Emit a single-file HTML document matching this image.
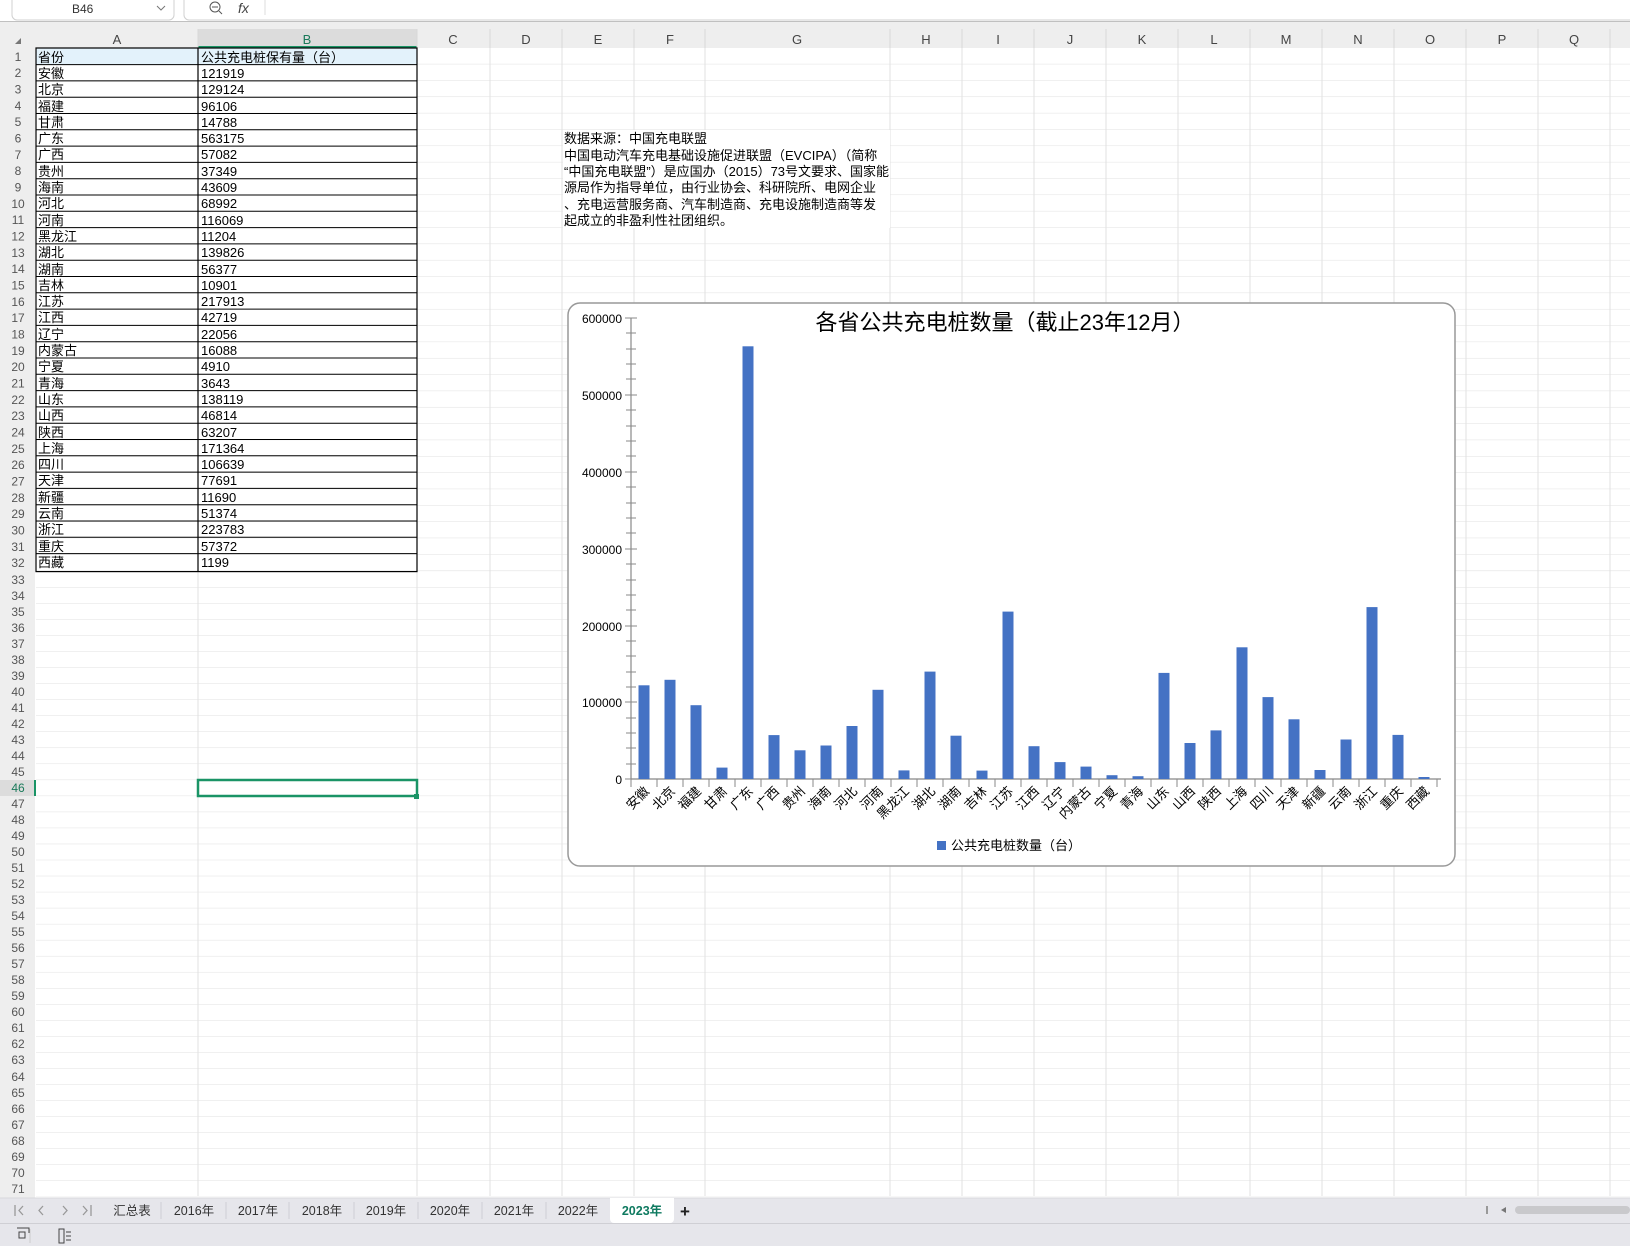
<!DOCTYPE html>
<html><head><meta charset="utf-8"><style>
html,body{margin:0;padding:0;width:1630px;height:1246px;overflow:hidden;background:#fff;font-family:"Liberation Sans","Noto Sans CJK SC",sans-serif}
svg text{font-family:"Liberation Sans","Noto Sans CJK SC",sans-serif}
</style></head><body>
<svg width="1630" height="1246" viewBox="0 0 1630 1246" xmlns="http://www.w3.org/2000/svg">
<defs>
<pattern id="rows" x="0" y="48" width="1630" height="16.34" patternUnits="userSpaceOnUse">
<line x1="0" y1="16.34" x2="1630" y2="16.34" stroke="#e1e1e1" stroke-width="1"/>
</pattern>
<pattern id="rows2" x="0" y="571.7" width="1630" height="16.03" patternUnits="userSpaceOnUse">
<line x1="0" y1="16.03" x2="1630" y2="16.03" stroke="#e1e1e1" stroke-width="1"/>
</pattern>
</defs>
<!-- top bar -->
<rect x="0" y="0" width="1630" height="21" fill="#fff"/>
<rect x="12" y="-6" width="162" height="26" rx="5" fill="#fff" stroke="#d0d0d0"/>
<text x="72" y="13" font-size="12" fill="#333">B46</text>
<path d="M157 6 L161 10 L165 6" fill="none" stroke="#777" stroke-width="1"/>
<rect x="184" y="-6" width="1460" height="26" rx="5" fill="#fff" stroke="#d0d0d0"/>
<circle cx="215" cy="7" r="5" fill="none" stroke="#555" stroke-width="1"/><line x1="212" y1="7" x2="218" y2="7" stroke="#555"/><line x1="219" y1="11" x2="222" y2="14" stroke="#555"/>
<text x="238" y="13" font-size="14" font-style="italic" font-family="Liberation Serif" fill="#444">fx</text>
<line x1="265" y1="0" x2="265" y2="15" stroke="#ddd"/>
<!-- header row -->
<rect x="0" y="21" width="1630" height="27" fill="#eeeeee"/>
<line x1="0" y1="21.5" x2="1630" y2="21.5" stroke="#c0c0c0"/>
<rect x="198" y="29" width="219" height="19" fill="#dcdcdc"/>
<line x1="198" y1="47" x2="417" y2="47" stroke="#1a9466" stroke-width="2"/>
<path d="M15 44 L21 38 L21 44 Z" fill="#777"/>
<!-- grid -->
<rect x="36" y="48" width="1594" height="523" fill="url(#rows)"/>
<rect x="36" y="571.7" width="1594" height="625" fill="url(#rows2)"/>
<g stroke="#e1e1e1">
<line x1="198" y1="48" x2="198" y2="1196"/><line x1="417" y1="48" x2="417" y2="1196"/><line x1="490" y1="48" x2="490" y2="1196"/><line x1="562" y1="48" x2="562" y2="1196"/><line x1="634" y1="48" x2="634" y2="1196"/><line x1="705" y1="48" x2="705" y2="1196"/><line x1="890" y1="48" x2="890" y2="1196"/><line x1="962" y1="48" x2="962" y2="1196"/><line x1="1034" y1="48" x2="1034" y2="1196"/><line x1="1106" y1="48" x2="1106" y2="1196"/><line x1="1178" y1="48" x2="1178" y2="1196"/><line x1="1250" y1="48" x2="1250" y2="1196"/><line x1="1322" y1="48" x2="1322" y2="1196"/><line x1="1394" y1="48" x2="1394" y2="1196"/><line x1="1466" y1="48" x2="1466" y2="1196"/><line x1="1538" y1="48" x2="1538" y2="1196"/><line x1="1610" y1="48" x2="1610" y2="1196"/>
</g>
<g stroke="#d8d8d8">
<line x1="198" y1="29" x2="198" y2="48"/><line x1="417" y1="29" x2="417" y2="48"/><line x1="490" y1="29" x2="490" y2="48"/><line x1="562" y1="29" x2="562" y2="48"/><line x1="634" y1="29" x2="634" y2="48"/><line x1="705" y1="29" x2="705" y2="48"/><line x1="890" y1="29" x2="890" y2="48"/><line x1="962" y1="29" x2="962" y2="48"/><line x1="1034" y1="29" x2="1034" y2="48"/><line x1="1106" y1="29" x2="1106" y2="48"/><line x1="1178" y1="29" x2="1178" y2="48"/><line x1="1250" y1="29" x2="1250" y2="48"/><line x1="1322" y1="29" x2="1322" y2="48"/><line x1="1394" y1="29" x2="1394" y2="48"/><line x1="1466" y1="29" x2="1466" y2="48"/><line x1="1538" y1="29" x2="1538" y2="48"/><line x1="1610" y1="29" x2="1610" y2="48"/>
</g>
<g font-size="13" fill="#444" text-anchor="middle">
<text x="117" y="44">A</text><text x="307" y="44" fill="#1a7a5a">B</text><text x="453" y="44">C</text><text x="526" y="44">D</text><text x="598" y="44">E</text><text x="670" y="44">F</text><text x="797" y="44">G</text><text x="926" y="44">H</text><text x="998" y="44">I</text><text x="1070" y="44">J</text><text x="1142" y="44">K</text><text x="1214" y="44">L</text><text x="1286" y="44">M</text><text x="1358" y="44">N</text><text x="1430" y="44">O</text><text x="1502" y="44">P</text><text x="1574" y="44">Q</text>
</g>
<!-- row header column -->
<rect x="0" y="48" width="35" height="1150" fill="#eeeeee"/>
<rect x="0" y="780" width="35" height="16" fill="#dcdcdc"/>
<line x1="35" y1="780" x2="35" y2="796" stroke="#1a9466" stroke-width="2"/>
<g font-size="12" fill="#555" text-anchor="middle">
<text x="18" y="61">1</text><text x="18" y="77">2</text><text x="18" y="93.5">3</text><text x="18" y="110">4</text><text x="18" y="126">5</text><text x="18" y="142.5">6</text><text x="18" y="159">7</text><text x="18" y="175">8</text><text x="18" y="191.5">9</text><text x="18" y="208">10</text><text x="18" y="224">11</text><text x="18" y="240.5">12</text><text x="18" y="257">13</text><text x="18" y="273">14</text><text x="18" y="289.5">15</text><text x="18" y="306">16</text><text x="18" y="322">17</text><text x="18" y="338.5">18</text><text x="18" y="355">19</text><text x="18" y="371">20</text><text x="18" y="387.5">21</text><text x="18" y="404">22</text><text x="18" y="420">23</text><text x="18" y="436.5">24</text><text x="18" y="453">25</text><text x="18" y="469">26</text><text x="18" y="485.5">27</text><text x="18" y="502">28</text><text x="18" y="518">29</text><text x="18" y="534.5">30</text><text x="18" y="551">31</text><text x="18" y="567">32</text>
<text x="18" y="584">33</text><text x="18" y="600">34</text><text x="18" y="616">35</text><text x="18" y="632">36</text><text x="18" y="648">37</text><text x="18" y="664">38</text><text x="18" y="680">39</text><text x="18" y="696">40</text><text x="18" y="712">41</text><text x="18" y="728">42</text><text x="18" y="744">43</text><text x="18" y="760">44</text><text x="18" y="776">45</text><text x="18" y="792" fill="#1a7a5a">46</text><text x="18" y="808">47</text><text x="18" y="824">48</text><text x="18" y="840">49</text><text x="18" y="856">50</text><text x="18" y="872">51</text><text x="18" y="888">52</text><text x="18" y="904">53</text><text x="18" y="920">54</text><text x="18" y="936">55</text><text x="18" y="952">56</text><text x="18" y="968">57</text><text x="18" y="984">58</text><text x="18" y="1000">59</text><text x="18" y="1016">60</text><text x="18" y="1032">61</text><text x="18" y="1048">62</text><text x="18" y="1064">63</text><text x="18" y="1081">64</text><text x="18" y="1097">65</text><text x="18" y="1113">66</text><text x="18" y="1129">67</text><text x="18" y="1145">68</text><text x="18" y="1161">69</text><text x="18" y="1177">70</text><text x="18" y="1193">71</text>
</g>
<!-- table -->
<rect x="36" y="48" width="381" height="16.3" fill="#e3f2fb"/>
<g stroke="#000" stroke-width="1.2" fill="none">
<rect x="36" y="48" width="381" height="523.6"/>
<line x1="198" y1="48" x2="198" y2="571.6"/>
</g>
<g stroke="#000" stroke-width="1">
<line x1="36" y1="64.6" x2="417" y2="64.6"/><line x1="36" y1="80.9" x2="417" y2="80.9"/><line x1="36" y1="97.2" x2="417" y2="97.2"/><line x1="36" y1="113.5" x2="417" y2="113.5"/><line x1="36" y1="129.8" x2="417" y2="129.8"/><line x1="36" y1="146.1" x2="417" y2="146.1"/><line x1="36" y1="162.4" x2="417" y2="162.4"/><line x1="36" y1="178.7" x2="417" y2="178.7"/><line x1="36" y1="195" x2="417" y2="195"/><line x1="36" y1="211.3" x2="417" y2="211.3"/><line x1="36" y1="227.6" x2="417" y2="227.6"/><line x1="36" y1="243.9" x2="417" y2="243.9"/><line x1="36" y1="260.2" x2="417" y2="260.2"/><line x1="36" y1="276.5" x2="417" y2="276.5"/><line x1="36" y1="292.8" x2="417" y2="292.8"/><line x1="36" y1="309.1" x2="417" y2="309.1"/><line x1="36" y1="325.4" x2="417" y2="325.4"/><line x1="36" y1="341.7" x2="417" y2="341.7"/><line x1="36" y1="358" x2="417" y2="358"/><line x1="36" y1="374.3" x2="417" y2="374.3"/><line x1="36" y1="390.6" x2="417" y2="390.6"/><line x1="36" y1="406.9" x2="417" y2="406.9"/><line x1="36" y1="423.2" x2="417" y2="423.2"/><line x1="36" y1="439.5" x2="417" y2="439.5"/><line x1="36" y1="455.8" x2="417" y2="455.8"/><line x1="36" y1="472.1" x2="417" y2="472.1"/><line x1="36" y1="488.4" x2="417" y2="488.4"/><line x1="36" y1="504.7" x2="417" y2="504.7"/><line x1="36" y1="521" x2="417" y2="521"/><line x1="36" y1="537.3" x2="417" y2="537.3"/><line x1="36" y1="553.6" x2="417" y2="553.6"/>
</g>
<g font-size="13" fill="#000">
<text x="38" y="62">省份</text><text x="201" y="62">公共充电桩保有量（台）</text>
<text x="38" y="78">安徽</text><text x="201" y="78">121919</text>
<text x="38" y="94">北京</text><text x="201" y="94">129124</text>
<text x="38" y="111">福建</text><text x="201" y="111">96106</text>
<text x="38" y="127">甘肃</text><text x="201" y="127">14788</text>
<text x="38" y="143">广东</text><text x="201" y="143">563175</text>
<text x="38" y="159">广西</text><text x="201" y="159">57082</text>
<text x="38" y="176">贵州</text><text x="201" y="176">37349</text>
<text x="38" y="192">海南</text><text x="201" y="192">43609</text>
<text x="38" y="208">河北</text><text x="201" y="208">68992</text>
<text x="38" y="225">河南</text><text x="201" y="225">116069</text>
<text x="38" y="241">黑龙江</text><text x="201" y="241">11204</text>
<text x="38" y="257">湖北</text><text x="201" y="257">139826</text>
<text x="38" y="274">湖南</text><text x="201" y="274">56377</text>
<text x="38" y="290">吉林</text><text x="201" y="290">10901</text>
<text x="38" y="306">江苏</text><text x="201" y="306">217913</text>
<text x="38" y="322">江西</text><text x="201" y="322">42719</text>
<text x="38" y="339">辽宁</text><text x="201" y="339">22056</text>
<text x="38" y="355">内蒙古</text><text x="201" y="355">16088</text>
<text x="38" y="371">宁夏</text><text x="201" y="371">4910</text>
<text x="38" y="388">青海</text><text x="201" y="388">3643</text>
<text x="38" y="404">山东</text><text x="201" y="404">138119</text>
<text x="38" y="420">山西</text><text x="201" y="420">46814</text>
<text x="38" y="437">陕西</text><text x="201" y="437">63207</text>
<text x="38" y="453">上海</text><text x="201" y="453">171364</text>
<text x="38" y="469">四川</text><text x="201" y="469">106639</text>
<text x="38" y="485">天津</text><text x="201" y="485">77691</text>
<text x="38" y="502">新疆</text><text x="201" y="502">11690</text>
<text x="38" y="518">云南</text><text x="201" y="518">51374</text>
<text x="38" y="534">浙江</text><text x="201" y="534">223783</text>
<text x="38" y="551">重庆</text><text x="201" y="551">57372</text>
<text x="38" y="567">西藏</text><text x="201" y="567">1199</text>
</g>
<!-- selected cell -->
<rect x="198" y="780" width="219" height="16" fill="none" stroke="#1a9466" stroke-width="2.5"/>
<rect x="414" y="794" width="5" height="5" fill="#1a9466"/>
<!-- note text -->
<rect x="563" y="130" width="327" height="98" fill="#fff"/>
<g font-size="13" fill="#000">
<text x="564" y="143">数据来源：中国充电联盟</text>
<text x="564" y="160">中国电动汽车充电基础设施促进联盟（EVCIPA）（简称</text>
<text x="564" y="176">“中国充电联盟”）是应国办（2015）73号文要求、国家能</text>
<text x="564" y="192">源局作为指导单位，由行业协会、科研院所、电网企业</text>
<text x="564" y="209">、充电运营服务商、汽车制造商、充电设施制造商等发</text>
<text x="564" y="225">起成立的非盈利性社团组织。</text>
</g>
<!-- chart -->
<rect x="568" y="303" width="887" height="563" rx="12" fill="#fff" stroke="#999" stroke-width="1.5"/>
<text x="1005" y="330" font-size="22" text-anchor="middle" fill="#000">各省公共充电桩数量（截止23年12月）</text>
<g stroke="#888" stroke-width="1.2">
<line x1="631" y1="318" x2="631" y2="779"/>
<line x1="631" y1="779" x2="1441" y2="779"/>
</g>
<g stroke="#888" stroke-width="1">
<path d="M625 318h12M625 395h12M625 472h12M625 549h12M625 626h12M625 702h12M625 779h12"/>
<path d="M626 333h10M626 349h10M626 364h10M626 379h10M626 410h10M626 426h10M626 441h10M626 456h10M626 487h10M626 503h10M626 518h10M626 533h10M626 564h10M626 580h10M626 595h10M626 610h10M626 641h10M626 656h10M626 672h10M626 687h10M626 718h10M626 733h10M626 748h10M626 764h10"/>
<path d="M631 779v8M657 779v8M683 779v8M709 779v8M735 779v8M761 779v8M787 779v8M813 779v8M839 779v8M865 779v8M891 779v8M917 779v8M943 779v8M969 779v8M995 779v8M1021 779v8M1047 779v8M1073 779v8M1099 779v8M1125 779v8M1151 779v8M1177 779v8M1203 779v8M1229 779v8M1255 779v8M1281 779v8M1307 779v8M1333 779v8M1359 779v8M1385 779v8M1411 779v8M1437 779v8"/>
</g>
<g font-size="12" fill="#000" text-anchor="end">
<text x="622" y="323">600000</text><text x="622" y="400">500000</text><text x="622" y="477">400000</text><text x="622" y="554">300000</text><text x="622" y="631">200000</text><text x="622" y="707">100000</text><text x="622" y="784">0</text>
</g>
<g fill="#4472c4">
<rect x="638.5" y="685.3" width="11" height="93.7"/>
<rect x="664.5" y="679.8" width="11" height="99.2"/>
<rect x="690.5" y="705.2" width="11" height="73.8"/>
<rect x="716.5" y="767.6" width="11" height="11.4"/>
<rect x="742.5" y="346.3" width="11" height="432.7"/>
<rect x="768.5" y="735.1" width="11" height="43.9"/>
<rect x="794.5" y="750.3" width="11" height="28.7"/>
<rect x="820.5" y="745.5" width="11" height="33.5"/>
<rect x="846.5" y="726" width="11" height="53"/>
<rect x="872.5" y="689.8" width="11" height="89.2"/>
<rect x="898.5" y="770.4" width="11" height="8.6"/>
<rect x="924.5" y="671.6" width="11" height="107.4"/>
<rect x="950.5" y="735.7" width="11" height="43.3"/>
<rect x="976.5" y="770.6" width="11" height="8.4"/>
<rect x="1002.5" y="611.6" width="11" height="167.4"/>
<rect x="1028.5" y="746.2" width="11" height="32.8"/>
<rect x="1054.5" y="762.1" width="11" height="16.9"/>
<rect x="1080.5" y="766.6" width="11" height="12.4"/>
<rect x="1106.5" y="775.2" width="11" height="3.8"/>
<rect x="1132.5" y="776.2" width="11" height="2.8"/>
<rect x="1158.5" y="672.9" width="11" height="106.1"/>
<rect x="1184.5" y="743" width="11" height="36"/>
<rect x="1210.5" y="730.4" width="11" height="48.6"/>
<rect x="1236.5" y="647.3" width="11" height="131.7"/>
<rect x="1262.5" y="697.1" width="11" height="81.9"/>
<rect x="1288.5" y="719.3" width="11" height="59.7"/>
<rect x="1314.5" y="770" width="11" height="9"/>
<rect x="1340.5" y="739.5" width="11" height="39.5"/>
<rect x="1366.5" y="607.1" width="11" height="171.9"/>
<rect x="1392.5" y="734.9" width="11" height="44.1"/>
<rect x="1418.5" y="777" width="11" height="2"/>
</g>
<g font-size="13" fill="#000" text-anchor="end">
<text transform="translate(650,792) rotate(-45)">安徽</text>
<text transform="translate(676,792) rotate(-45)">北京</text>
<text transform="translate(702,792) rotate(-45)">福建</text>
<text transform="translate(728,792) rotate(-45)">甘肃</text>
<text transform="translate(754,792) rotate(-45)">广东</text>
<text transform="translate(780,792) rotate(-45)">广西</text>
<text transform="translate(806,792) rotate(-45)">贵州</text>
<text transform="translate(832,792) rotate(-45)">海南</text>
<text transform="translate(858,792) rotate(-45)">河北</text>
<text transform="translate(884,792) rotate(-45)">河南</text>
<text transform="translate(910,792) rotate(-45)">黑龙江</text>
<text transform="translate(936,792) rotate(-45)">湖北</text>
<text transform="translate(962,792) rotate(-45)">湖南</text>
<text transform="translate(988,792) rotate(-45)">吉林</text>
<text transform="translate(1014,792) rotate(-45)">江苏</text>
<text transform="translate(1040,792) rotate(-45)">江西</text>
<text transform="translate(1066,792) rotate(-45)">辽宁</text>
<text transform="translate(1092,792) rotate(-45)">内蒙古</text>
<text transform="translate(1118,792) rotate(-45)">宁夏</text>
<text transform="translate(1144,792) rotate(-45)">青海</text>
<text transform="translate(1170,792) rotate(-45)">山东</text>
<text transform="translate(1196,792) rotate(-45)">山西</text>
<text transform="translate(1222,792) rotate(-45)">陕西</text>
<text transform="translate(1248,792) rotate(-45)">上海</text>
<text transform="translate(1274,792) rotate(-45)">四川</text>
<text transform="translate(1300,792) rotate(-45)">天津</text>
<text transform="translate(1326,792) rotate(-45)">新疆</text>
<text transform="translate(1352,792) rotate(-45)">云南</text>
<text transform="translate(1378,792) rotate(-45)">浙江</text>
<text transform="translate(1404,792) rotate(-45)">重庆</text>
<text transform="translate(1430,792) rotate(-45)">西藏</text>
</g>
<rect x="937" y="841" width="9" height="9" fill="#4472c4"/>
<text x="951" y="850" font-size="13" fill="#000">公共充电桩数量（台）</text>
<!-- tab bar -->
<rect x="0" y="1198" width="1630" height="48" fill="#e6e6eb"/>
<line x1="0" y1="1198" x2="1630" y2="1198" stroke="#d8d8dc"/>
<line x1="0" y1="1223.5" x2="1630" y2="1223.5" stroke="#cfcfd4"/>
<g stroke="#999" stroke-width="1.3" fill="none">
<path d="M15 1205v11M23 1206l-4 4.5 4 4.5"/>
<path d="M43 1206l-4 4.5 4 4.5"/>
<path d="M63 1206l4 4.5-4 4.5"/>
<path d="M83 1206l4 4.5-4 4.5M91 1205v11"/>
</g>
<g stroke="#cfcfd4"><line x1="161" y1="1202" x2="161" y2="1219"/><line x1="226" y1="1202" x2="226" y2="1219"/><line x1="289" y1="1202" x2="289" y2="1219"/><line x1="354" y1="1202" x2="354" y2="1219"/><line x1="418" y1="1202" x2="418" y2="1219"/><line x1="482" y1="1202" x2="482" y2="1219"/><line x1="546" y1="1202" x2="546" y2="1219"/></g>
<path d="M610 1198 h64 v21 a4 4 0 0 1 -4 4 h-56 a4 4 0 0 1 -4 -4 z" fill="#fff"/>
<g font-size="12.5" fill="#333" text-anchor="middle">
<text x="132" y="1215">汇总表</text><text x="194" y="1215">2016年</text><text x="258" y="1215">2017年</text><text x="322" y="1215">2018年</text><text x="386" y="1215">2019年</text><text x="450" y="1215">2020年</text><text x="514" y="1215">2021年</text><text x="578" y="1215">2022年</text>
<text x="642" y="1215" fill="#0f7a60" font-weight="bold">2023年</text>
</g>
<text x="685" y="1217" font-size="17" font-weight="bold" fill="#222" text-anchor="middle">+</text>
<rect x="1486" y="1206" width="2" height="8" fill="#999"/>
<path d="M1501 1210 l5 -3 v6 z" fill="#777"/>
<rect x="1515" y="1206" width="115" height="8" rx="4" fill="#c9c9cc"/>
<g stroke="#444" fill="none" stroke-width="1">
<rect x="19" y="1232" width="6" height="6"/><path d="M17 1228 h12 v5"/>
<line x1="30" y1="1229" x2="30" y2="1243" stroke="#ccc"/>
<path d="M59 1229 h5 v14 h-5 z M66 1232 h5 M66 1236 h5 M66 1240 h5"/>
</g>
</svg>
</body></html>
